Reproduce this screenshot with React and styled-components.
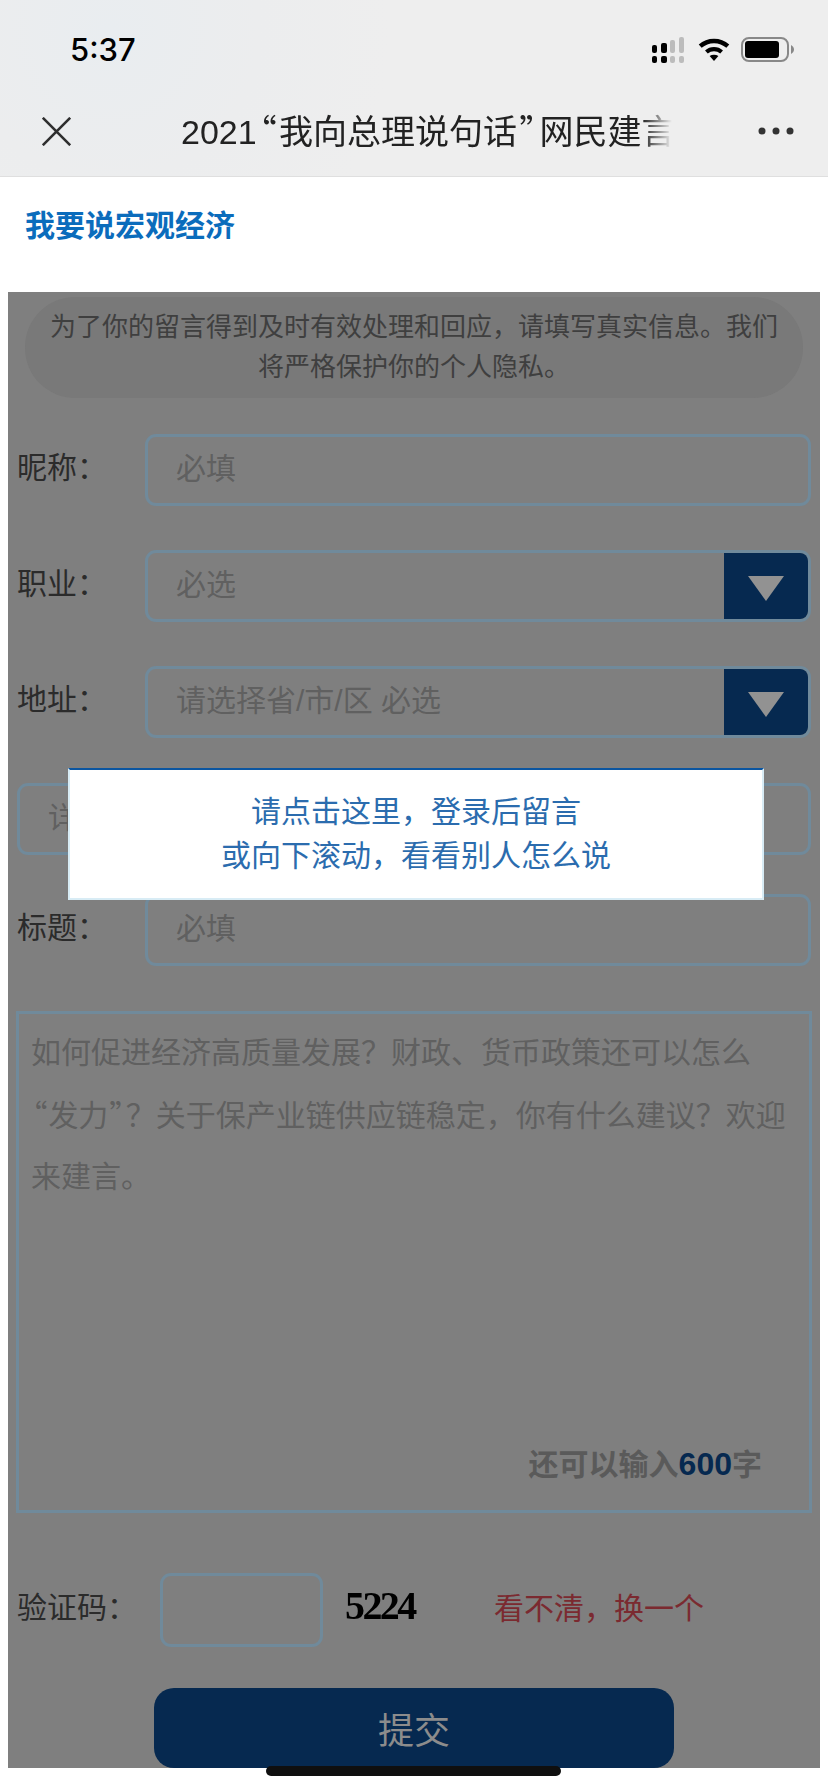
import React from 'react';
import styled, { createGlobalStyle } from 'styled-components';

const GlobalStyle = createGlobalStyle`
  html, body {
    margin: 0;
    padding: 0;
    background: #fff;
  }
  * {
    box-sizing: border-box;
  }
`;

const FONT = '"Liberation Sans", "Noto Sans CJK SC", sans-serif';
const NAVY = '#062950';
const EDGE = '#708a9b';

const Page = styled.div`
  position: relative;
  width: 828px;
  height: 1792px;
  overflow: hidden;
  background: #fff;
  font-family: ${FONT};
`;

const TopBars = styled.header`
  height: 177px;
  background: radial-gradient(circle at 110px 30px, #e9edf0 0, #ecedee 150px, #eeeeee 280px);
  border-bottom: 1px solid #dfdfdf;
`;

const StatusBar = styled.div`
  height: 90px;
  padding: 8px 34px 0 70px;
  display: flex;
  align-items: center;
  justify-content: space-between;
`;

const Clock = styled.span`
  font-family: Inter, sans-serif;
  font-size: 31px;
  font-weight: 550;
  color: #000;
`;

const StatusIcons = styled.div`
  display: flex;
  align-items: center;
`;

const NavBar = styled.div`
  height: 86px;
  padding: 0 34px 4px 42px;
  display: flex;
  align-items: center;
`;

const NavTitle = styled.div`
  width: 491px;
  margin-left: 110px;
  font-size: 34px;
  line-height: 44px;
  color: #222;
  white-space: nowrap;
  overflow: hidden;
  mask-image: linear-gradient(to right, #000 94%, transparent 100%);
`;

const Quote = styled.span`
  font-family: "Noto Sans CJK SC", sans-serif;
  font-feature-settings: "palt";
  padding: 0 ${props => props.$pad || 0.04}em;
`;

const MoreDots = styled.svg`
  margin-left: auto;
`;

const TopicBar = styled.div`
  height: 115px;
  padding: 29px 25px 0;
  font-size: 30px;
  line-height: 40px;
  font-weight: 700;
  color: #0b6cbc;
`;

const Dimmed = styled.section`
  position: relative;
  height: 1476px;
  margin: 0 8px;
  padding: 5px 9px 0;
  overflow: hidden;
  background: #7f7f7f;
`;

const Notice = styled.p`
  margin: 0 8px;
  padding: 10px 16px 11px;
  border-radius: 50px;
  background: #797979;
  font-size: 26px;
  line-height: 40px;
  text-align: center;
  color: #3f3f3f;
`;

const FieldRow = styled.div`
  display: flex;
  align-items: center;
  margin-top: ${props => props.$top}px;
`;

const Label = styled.label`
  flex: none;
  width: ${props => props.$width || 128}px;
  padding-bottom: 5px;
  font-size: 30px;
  line-height: 40px;
  color: #2b2b2b;
`;

const FieldBox = styled.div`
  flex: 1;
  height: 72px;
  display: flex;
  border: 3px solid ${EDGE};
  border-radius: 11px;
  overflow: hidden;
`;

const FieldInput = styled.input`
  flex: 1;
  min-width: 0;
  padding: 0 0 3px 28px;
  border: none;
  outline: none;
  background: transparent;
  font-family: ${FONT};
  font-size: 30px;

  &::placeholder {
    color: #606060;
    opacity: 1;
  }
`;

const DropButton = styled.div`
  flex: none;
  width: 84px;
  padding-top: 5px;
  display: flex;
  align-items: center;
  justify-content: center;
  border-radius: 0 6px 6px 0;
  background: ${NAVY};
`;

const Arrow = styled.div`
  width: 0;
  height: 0;
  border-left: 18px solid transparent;
  border-right: 18px solid transparent;
  border-top: 25px solid #929292;
`;

const MessageBox = styled.div`
  height: 502px;
  margin: 45px -1px 0;
  padding: 8px 47px 25px 12px;
  display: flex;
  flex-direction: column;
  justify-content: space-between;
  border: 3px solid ${EDGE};
`;

const MessageText = styled.p`
  margin: 0;
  font-size: 30px;
  line-height: 61px;
  color: #606060;
  white-space: nowrap;
`;

const Counter = styled.div`
  align-self: flex-end;
  font-size: 30px;
  line-height: 40px;
  font-weight: 700;
  color: #5a5a5a;

  b {
    font-size: 32px;
    color: ${NAVY};
  }
`;

const CodeInput = styled.div`
  flex: none;
  width: 163px;
  height: 74px;
  border: 3px solid ${EDGE};
  border-radius: 11px;
`;

const CodeImage = styled.div`
  flex: none;
  width: 149px;
  margin-left: 22px;
  padding-bottom: 10px;
  font-family: "Liberation Serif", serif;
  font-size: 40px;
  font-weight: 700;
  letter-spacing: -2.6px;
  color: #000;
  filter: blur(0.4px);
`;

const RefreshLink = styled.span`
  font-size: 30px;
  line-height: 40px;
  padding-bottom: 3px;
  color: #7b2a30;
`;

const SubmitButton = styled.div`
  width: 520px;
  height: 80px;
  margin: 41px auto 0;
  display: flex;
  align-items: center;
  justify-content: center;
  border-radius: 20px;
  background: ${NAVY};
  font-size: 36px;
  color: #8c8c8c;
`;

const LoginPrompt = styled.div`
  position: absolute;
  top: 476px;
  left: 60px;
  width: 696px;
  height: 132px;
  padding: 20px 0;
  background: #fff;
  border: 2px solid #d8ecf5;
  border-top-color: #0b55a0;
  font-size: 30px;
  line-height: 44px;
  text-align: center;
  color: #2b6cae;
`;

const HomeIndicator = styled.div`
  position: absolute;
  left: 266px;
  bottom: 16px;
  width: 295px;
  height: 10px;
  border-radius: 5px;
  background: #0f0f0f;
`;

const SignalIcon = () => (
  <svg width="34" height="27" viewBox="0 0 34 27">
    <g fill="#000">
      <rect x="1" y="9" width="5" height="8" rx="2" />
      <rect x="10" y="7" width="6" height="10" rx="2" />
      <rect x="1" y="20" width="5" height="7" rx="2" />
      <rect x="10" y="20" width="6" height="7" rx="2" />
    </g>
    <g fill="#bcbcbc">
      <rect x="19" y="4" width="5" height="13" rx="2" />
      <rect x="28" y="1" width="5" height="16" rx="2" />
      <rect x="19" y="20" width="5" height="7" rx="2" />
      <rect x="28" y="20" width="5" height="7" rx="2" />
    </g>
  </svg>
);

const WifiIcon = () => (
  <svg width="32" height="24" viewBox="0 0 32 24" style={{ marginLeft: 13 }}>
    <path d="M2.2 9.2 C10 2.2 22 2.2 29.8 9.2" fill="none" stroke="#000" strokeWidth="4.4" />
    <path d="M8.4 15 C12.8 11.2 19.2 11.2 23.6 15" fill="none" stroke="#000" strokeWidth="4.2" />
    <path d="M11.6 19 C14.2 17.2 17.8 17.2 20.4 19 L16 24 Z" fill="#000" />
  </svg>
);

const BatteryIcon = () => (
  <svg width="53" height="25" viewBox="0 0 53 25" style={{ marginLeft: 11 }}>
    <rect x="1" y="1" width="46" height="23" rx="7" fill="none" stroke="#888" strokeWidth="2" />
    <rect x="4" y="4" width="34" height="17" rx="3" fill="#000" />
    <path d="M50 8 C52 9 53 11 53 12.5 C53 14 52 16 50 17 Z" fill="#888" />
  </svg>
);

const CloseIcon = () => (
  <svg width="29" height="29" viewBox="0 0 29 29">
    <path d="M0.8 0.8 L28.2 28.2 M28.2 0.8 L0.8 28.2" stroke="#2e2e2e" strokeWidth="2.6" />
  </svg>
);

const MoreIcon = () => (
  <MoreDots width="36" height="8" viewBox="0 0 36 8">
    <circle cx="4" cy="4" r="3.5" fill="#333" />
    <circle cx="18" cy="4" r="3.5" fill="#333" />
    <circle cx="32" cy="4" r="3.5" fill="#333" />
  </MoreDots>
);

const TextField = ({ label, placeholder, top, select }) => (
  <FieldRow $top={top}>
    {label && <Label>{label}</Label>}
    <FieldBox>
      <FieldInput placeholder={placeholder} readOnly />
      {select && (
        <DropButton>
          <Arrow />
        </DropButton>
      )}
    </FieldBox>
  </FieldRow>
);

const App = () => {
  return (
    <Page>
      <GlobalStyle />
      <TopBars>
        <StatusBar>
          <Clock>5:37</Clock>
          <StatusIcons>
            <SignalIcon />
            <WifiIcon />
            <BatteryIcon />
          </StatusIcons>
        </StatusBar>
        <NavBar>
          <CloseIcon />
          <NavTitle>2021<Quote $pad={0.08}>“</Quote>我向总理说句话<Quote $pad={0.08}>”</Quote>网民建言征集</NavTitle>
          <MoreIcon />
        </NavBar>
      </TopBars>
      <TopicBar>我要说宏观经济</TopicBar>
      <Dimmed>
        <Notice>为了你的留言得到及时有效处理和回应，请填写真实信息。我们将严格保护你的个人隐私。</Notice>
        <TextField label="昵称：" placeholder="必填" top={36} />
        <TextField label="职业：" placeholder="必选" top={44} select />
        <TextField label="地址：" placeholder="请选择省/市/区 必选" top={44} select />
        <TextField placeholder="详细地址 必填" top={45} />
        <TextField label="标题：" placeholder="必填" top={39} />
        <MessageBox>
          <MessageText>
            如何促进经济高质量发展？财政、货币政策还可以怎么
            <br />
            <Quote>“</Quote>发力<Quote>”</Quote>？关于保产业链供应链稳定，你有什么建议？欢迎
            <br />
            来建言。
          </MessageText>
          <Counter>还可以输入<b>600</b>字</Counter>
        </MessageBox>
        <FieldRow $top={60}>
          <Label $width={143}>验证码：</Label>
          <CodeInput />
          <CodeImage>5224</CodeImage>
          <RefreshLink>看不清，换一个</RefreshLink>
        </FieldRow>
        <SubmitButton>提交</SubmitButton>
        <LoginPrompt>
          请点击这里，登录后留言
          <br />
          或向下滚动，看看别人怎么说
        </LoginPrompt>
      </Dimmed>
      <HomeIndicator />
    </Page>
  );
};

export default App;
